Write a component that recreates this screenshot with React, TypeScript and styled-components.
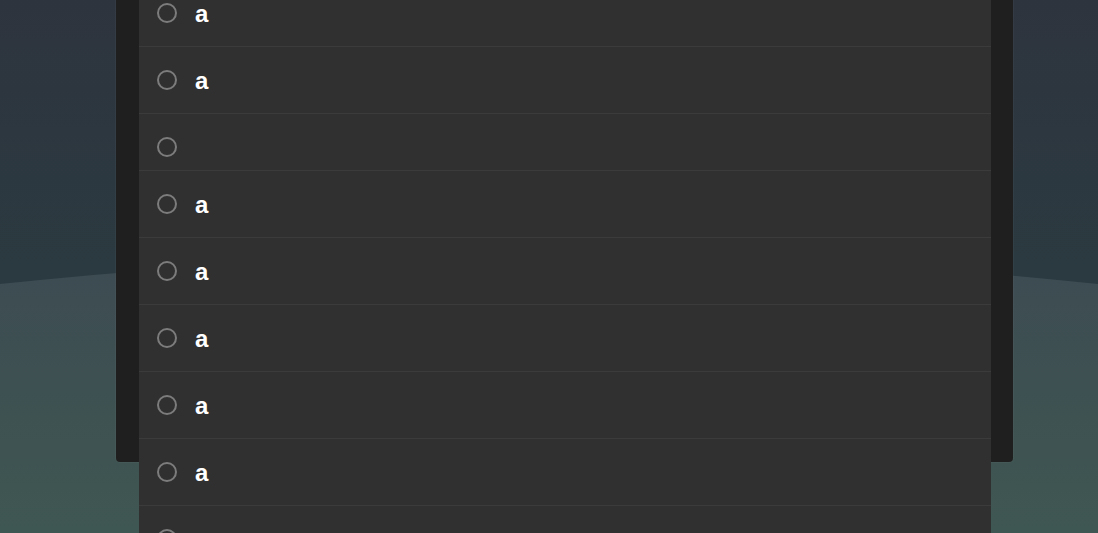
import React from "react";
import styled, { createGlobalStyle } from "styled-components";

const Global = createGlobalStyle`
  html, body { margin: 0; padding: 0; height: 100%; }
  body { font-family: "Liberation Sans", Arial, sans-serif; background: #2c3740; }
  #root { height: 100%; }
`;

const Stage = styled.div`
  position: relative;
  height: 100vh;
  overflow: hidden;
  display: flex;
  align-items: flex-start;
`;

const Backdrop = styled.svg`
  position: absolute;
  inset: 0;
  width: 100%;
  height: 100%;
  z-index: 0;
`;

const Panel = styled.section`
  position: relative;
  z-index: 1;
  box-sizing: border-box;
  width: 897px;
  height: 502px;
  margin: -40px 0 0 116px;
  padding: 20px 22px 0 23px;
  background: #1f1f1f;
  border-radius: 0 0 4px 4px;
  box-shadow: 0 0 0 1px rgba(255, 255, 255, 0.03);
`;

const List = styled.ul`
  list-style: none;
  margin: 0;
  padding: 0;
  background: #303030;
`;

const Row = styled.li`
  display: flex;
  align-items: flex-start;
  padding: 22px 0 13px 18px;
  border-bottom: 1px solid #3b3b3b;
`;

const Radio = styled.span`
  flex: none;
  box-sizing: border-box;
  width: 20px;
  height: 20px;
  margin-top: 1px;
  border: 2px solid #7c7c7c;
  border-radius: 50%;
`;

const Label = styled.span`
  margin-left: 18px;
  padding-bottom: 7px;
  font-family: "Liberation Sans", Arial, sans-serif;
  font-weight: 700;
  font-size: 24px;
  line-height: 24px;
  color: #ffffff;
`;

const items = ["a", "a", "", "a", "a", "a", "a", "a", ""];

export default function App() {
  return (
    <>
      <Global />
      <Stage>
        <Backdrop viewBox="0 0 1098 533" preserveAspectRatio="none">
          <defs>
            <linearGradient id="sky" x1="0" y1="0" x2="0" y2="533" gradientUnits="userSpaceOnUse">
              <stop offset="0" stopColor="#2e343e" />
              <stop offset="0.5" stopColor="#2b3a40" />
              <stop offset="1" stopColor="#2b3a40" />
            </linearGradient>
            <linearGradient id="hill" x1="0" y1="255" x2="0" y2="533" gradientUnits="userSpaceOnUse">
              <stop offset="0" stopColor="#3d4b52" />
              <stop offset="1" stopColor="#3f5752" />
            </linearGradient>
          </defs>
          <rect x="0" y="0" width="1098" height="533" fill="url(#sky)" />
          <circle cx="549" cy="5446" r="5191" fill="url(#hill)" />
        </Backdrop>
        <Panel>
          <List>
            {items.map((t, i) => (
              <Row key={i}>
                <Radio />
                {t && <Label>{t}</Label>}
              </Row>
            ))}
          </List>
        </Panel>
      </Stage>
    </>
  );
}
